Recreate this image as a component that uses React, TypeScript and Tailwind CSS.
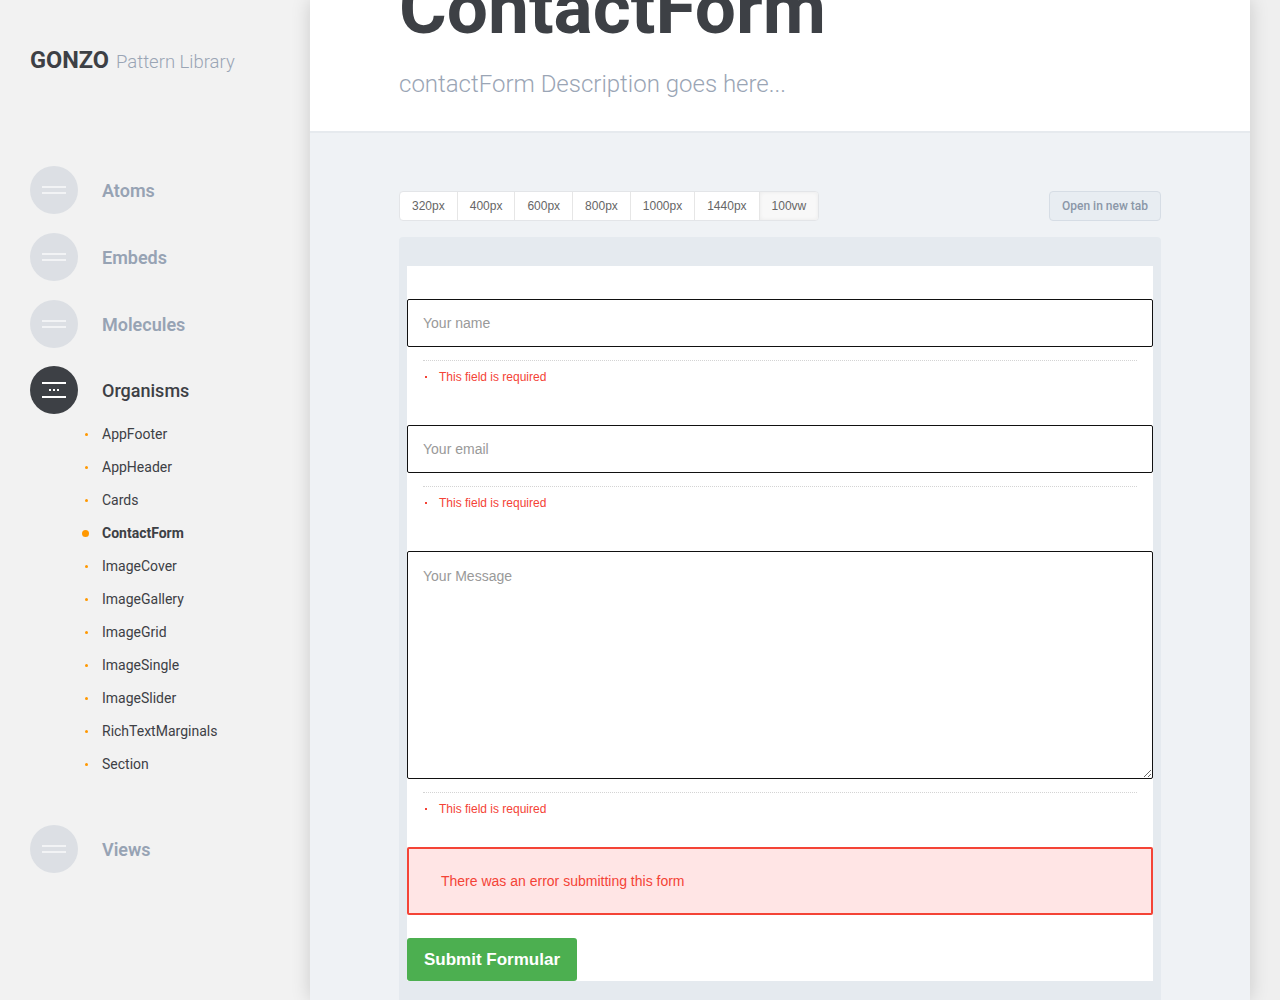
import React from 'react'

const sans = { fontFamily: 'Roboto, "Liberation Sans", sans-serif' }
const helv = { fontFamily: '"Liberation Sans", Arial, sans-serif' }

const sections = ['Atoms', 'Embeds', 'Molecules', 'Organisms', 'Views']
const organisms = [
  'AppFooter',
  'AppHeader',
  'Cards',
  'ContactForm',
  'ImageCover',
  'ImageGallery',
  'ImageGrid',
  'ImageSingle',
  'ImageSlider',
  'RichTextMarginals',
  'Section',
]
const widths = ['320px', '400px', '600px', '800px', '1000px', '1440px', '100vw']

function NavIcon({ active }: { active?: boolean }) {
  if (active) {
    return (
      <span className="flex h-12 w-12 shrink-0 items-center justify-center rounded-full bg-[#3d4045]">
        <svg width="26" height="18" viewBox="0 0 26 18">
          <rect x="1" y="1" width="24" height="2" fill="#fff" />
          <rect x="8" y="8" width="2" height="2" fill="#fff" />
          <rect x="12" y="8" width="2" height="2" fill="#fff" />
          <rect x="16" y="8" width="2" height="2" fill="#fff" />
          <rect x="1" y="15" width="24" height="2" fill="#fff" />
        </svg>
      </span>
    )
  }
  return (
    <span className="flex h-12 w-12 shrink-0 items-center justify-center rounded-full bg-[#dcdfe4]">
      <svg width="26" height="10" viewBox="0 0 26 10">
        <rect x="1" y="1" width="24" height="2" fill="#f2f3f5" />
        <rect x="1" y="7" width="24" height="2" fill="#f2f3f5" />
      </svg>
    </span>
  )
}

function Sidebar() {
  return (
    <aside className="w-[310px] shrink-0 px-[30px] pt-[43px]" style={sans}>
      <div className="flex items-baseline gap-[7px]">
        <span className="text-[23.5px] font-bold text-[#3d4045]">GONZO</span>
        <span className="text-[18.5px] font-light text-[#9aa5b5]">Pattern Library</span>
      </div>
      <nav className="mt-[88px] flex flex-col">
        {sections.map((s) => {
          const active = s === 'Organisms'
          return (
            <div key={s} className={s === 'Views' ? 'mt-[44px]' : ''}>
              <div className={`flex items-center gap-6 ${s === 'Atoms' || s === 'Views' ? '' : 'mt-[19px]'} ${s === 'Organisms' ? '!mt-[18px]' : ''}`}>
                <NavIcon active={active} />
                <span className={`text-[18px] ${active ? 'font-medium text-[#3d4045]' : 'font-semibold text-[#97a3b4]'}`}>{s}</span>
              </div>
              {active && (
                <ul className="mt-[4px] flex flex-col">
                  {organisms.map((o) => {
                    const cur = o === 'ContactForm'
                    return (
                      <li key={o} className="relative flex h-[33px] items-center pl-[72px] text-[14px] text-[#3d4045]">
                        <span
                          className={`absolute rounded-full bg-[#ff9800] ${cur ? 'left-[52px] h-[7px] w-[7px]' : 'left-[55px] h-[3px] w-[3px]'}`}
                        />
                        <span className={cur ? 'font-bold' : ''}>{o}</span>
                      </li>
                    )
                  })}
                </ul>
              )}
            </div>
          )
        })}
      </nav>
    </aside>
  )
}

function Field({ label, area }: { label: string; area?: boolean }) {
  return (
    <div className="mb-[41px]">
      {area ? (
        <textarea
          placeholder={label}
          className="block h-[228px] w-full resize-y rounded-[2px] border border-[#111] px-[15px] py-[14px] text-[14px] text-[#333] placeholder:text-[#999] outline-none"
          style={helv}
        />
      ) : (
        <input
          placeholder={label}
          className="block h-[48px] w-full rounded-[2px] border border-[#111] px-[15px] text-[14px] text-[#333] placeholder:text-[#999] outline-none"
          style={helv}
        />
      )}
      <ul className="mx-[16px] mt-[13px] border-t border-dotted border-[#d4d4d4] pt-[9px]">
        <li className="relative flex h-[14px] items-center pl-[16px] text-[12px] text-[#f44336]" style={helv}>
          <span className="absolute left-[2px] h-[2px] w-[2px] bg-[#f44336]" />
          This field is required
        </li>
      </ul>
    </div>
  )
}

export default function App() {
  return (
    <div className="flex h-[1000px] overflow-hidden bg-[#f2f2f2]">
      <Sidebar />
      <main className="relative z-10 w-[940px] shrink-0 shadow-[0_0_18px_rgba(0,0,0,0.16)]">
        <header className="h-[133px] overflow-hidden border-b-2 border-[#e6eaee] bg-white pl-[89px]" style={sans}>
          <h1 className="mt-[-28px] text-[73px] font-bold leading-none text-[#3d4045]">ContactForm</h1>
          <p className="mt-[21px] text-[24px] font-light text-[#9aa5b5]">contactForm Description goes here...</p>
        </header>
        <section className="h-full bg-[#eff2f5] px-[89px] pt-[58px]">
          <div className="flex items-center justify-between">
            <div className="flex overflow-hidden rounded-[4px] border border-[#e3e5e8] bg-white" style={helv}>
              {widths.map((w, i) => (
                <button
                  key={w}
                  className={`h-[28px] px-[12px] text-[12px] text-[#666] ${i > 0 ? 'border-l border-[#e6e6e6]' : ''} ${
                    w === '100vw' ? 'bg-[#f8f8f8] shadow-[inset_0_0_4px_rgba(0,0,0,0.06)]' : ''
                  }`}
                >
                  {w}
                </button>
              ))}
            </div>
            <button
              className="h-[30px] rounded-[4px] border border-[#d6dde5] bg-[#e8edf2] px-[12px] text-[12px] font-medium text-[#8b97a8]"
              style={sans}
            >
              Open in new tab
            </button>
          </div>
          <div className="mt-[16px] rounded-t-[4px] bg-[#e5eaef] px-[8px] pt-[29px] pb-[40px]">
            <form className="bg-white pt-[33px]" onSubmit={(e) => e.preventDefault()}>
              <Field label="Your name" />
              <Field label="Your email" />
              <Field label="Your Message" area />
              <div
                className="-mt-[10px] flex h-[68px] items-center rounded-[2px] border-2 border-[#f44336] bg-[#ffe5e5] pl-[32px] text-[14px] text-[#f44336]"
                style={helv}
              >
                There was an error submitting this form
              </div>
              <button
                type="submit"
                className="mt-[23px] h-[43px] rounded-[3px] bg-[#4caf50] px-[17px] text-[17px] font-bold text-white"
                style={helv}
              >
                Submit Formular
              </button>
            </form>
          </div>
        </section>
      </main>
      <div className="flex-1 bg-[#efefef]" />
    </div>
  )
}
